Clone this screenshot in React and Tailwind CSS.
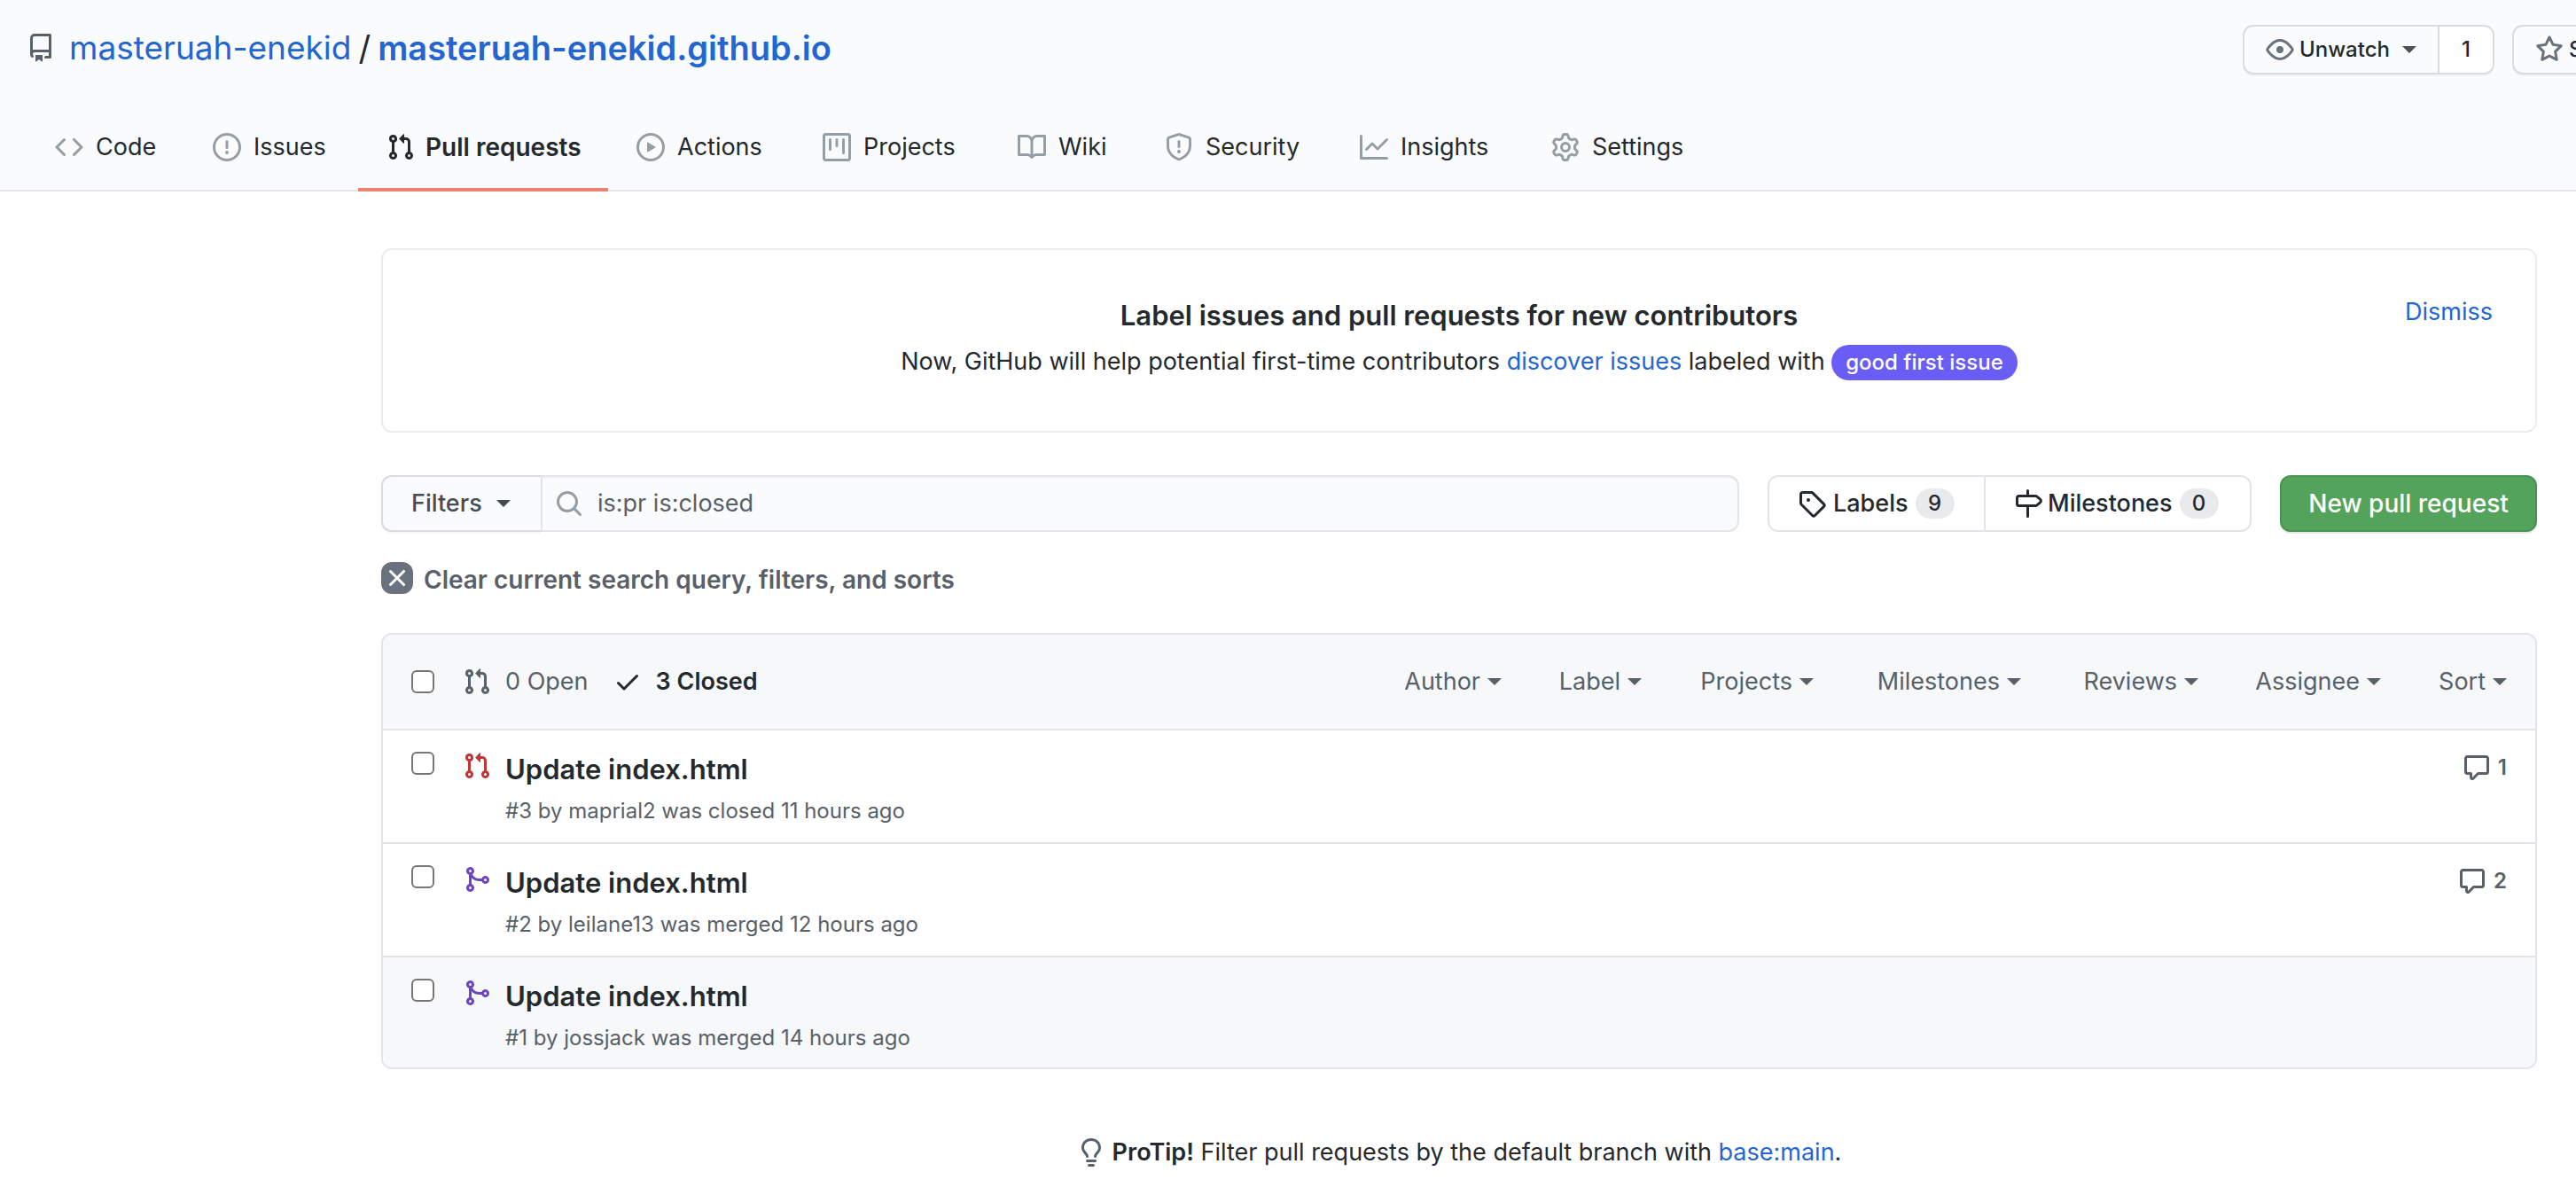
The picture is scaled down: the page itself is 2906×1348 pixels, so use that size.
import React from "react";

const PATHS = {
  repo: "M2 2.5A2.5 2.5 0 014.5 0h8.75a.75.75 0 01.75.75v12.5a.75.75 0 01-.75.75h-2.5a.75.75 0 110-1.5h1.75v-2h-8a1 1 0 00-.714 1.7.75.75 0 01-1.072 1.05A2.495 2.495 0 012 11.5v-9zm10.5-1V9h-8c-.356 0-.694.074-1 .208V2.5a1 1 0 011-1h8zM5 12.25v3.25a.25.25 0 00.4.2l1.45-1.087a.25.25 0 01.3 0L8.6 15.7a.25.25 0 00.4-.2v-3.25a.25.25 0 00-.25-.25h-3.5a.25.25 0 00-.25.25z",
  code: "M4.72 3.22a.75.75 0 011.06 1.06L2.06 8l3.72 3.72a.75.75 0 11-1.06 1.06L.47 8.53a.75.75 0 010-1.06l4.25-4.25zm6.56 0a.75.75 0 10-1.06 1.06L13.94 8l-3.72 3.72a.75.75 0 101.06 1.06l4.25-4.25a.75.75 0 000-1.06l-4.25-4.25z",
  issue: "M8 1.5a6.5 6.5 0 100 13 6.5 6.5 0 000-13zM0 8a8 8 0 1116 0A8 8 0 010 8zm9 3a1 1 0 11-2 0 1 1 0 012 0zm-.25-6.25a.75.75 0 00-1.5 0v3.5a.75.75 0 001.5 0v-3.5z",
  pull: "M7.177 3.073L9.573.677A.25.25 0 0110 .854v4.792a.25.25 0 01-.427.177L7.177 3.427a.25.25 0 010-.354zM3.75 2.5a.75.75 0 100 1.5.75.75 0 000-1.5zm-2.25.75a2.25 2.25 0 113 2.122v5.256a2.251 2.251 0 11-1.5 0V5.372A2.25 2.25 0 011.5 3.25zM11 2.5h-1V4h1a1 1 0 011 1v5.628a2.251 2.251 0 101.5 0V5A2.5 2.5 0 0011 2.5zm1 10.25a.75.75 0 111.5 0 .75.75 0 01-1.5 0zM3.75 12a.75.75 0 100 1.5.75.75 0 000-1.5z",
  play: "M1.5 8a6.5 6.5 0 1113 0 6.5 6.5 0 01-13 0zM8 0a8 8 0 100 16A8 8 0 008 0zM6.379 5.227A.25.25 0 006 5.442v5.117a.25.25 0 00.379.214l4.264-2.559a.25.25 0 000-.428L6.379 5.227z",
  project: "M1.75 0A1.75 1.75 0 000 1.75v12.5C0 15.216.784 16 1.75 16h12.5A1.75 1.75 0 0016 14.25V1.75A1.75 1.75 0 0014.25 0H1.75zM1.5 1.75a.25.25 0 01.25-.25h12.5a.25.25 0 01.25.25v12.5a.25.25 0 01-.25.25H1.75a.25.25 0 01-.25-.25V1.75zM11.75 3a.75.75 0 00-.75.75v7.5a.75.75 0 001.5 0v-7.5a.75.75 0 00-.75-.75zm-8.25.75a.75.75 0 011.5 0v5.5a.75.75 0 01-1.5 0v-5.5zM8 3a.75.75 0 00-.75.75v3.5a.75.75 0 001.5 0v-3.5A.75.75 0 008 3z",
  book: "M0 1.75A.75.75 0 01.75 1h4.253c1.227 0 2.317.59 3 1.501A3.744 3.744 0 0111.006 1h4.245a.75.75 0 01.75.75v10.5a.75.75 0 01-.75.75h-4.507a2.25 2.25 0 00-1.591.659l-.622.621a.75.75 0 01-1.06 0l-.622-.621A2.25 2.25 0 005.258 13H.75a.75.75 0 01-.75-.75V1.75zm8.755 3a2.25 2.25 0 012.25-2.25H14.5v9h-3.757c-.71 0-1.4.201-1.992.572l.004-7.322zm-1.504 7.324l.004-5.073-.002-2.253A2.25 2.25 0 005.003 2.5H1.5v9h3.757a3.75 3.75 0 011.994.574z",
  shield: "M7.467.133a1.75 1.75 0 011.066 0l5.25 1.68A1.75 1.75 0 0115 3.48V7c0 1.566-.32 3.182-1.303 4.682-.983 1.498-2.585 2.813-5.032 3.855a1.7 1.7 0 01-1.33 0c-2.447-1.042-4.049-2.357-5.032-3.855C1.32 10.182 1 8.566 1 7V3.48a1.75 1.75 0 011.217-1.667l5.25-1.68zm.61 1.429a.25.25 0 00-.153 0l-5.25 1.68a.25.25 0 00-.174.238V7c0 1.358.275 2.666 1.057 3.86.784 1.194 2.121 2.34 4.366 3.297a.2.2 0 00.154 0c2.245-.956 3.582-2.104 4.366-3.298C13.225 9.666 13.5 8.36 13.5 7V3.48a.25.25 0 00-.174-.237l-5.25-1.68zM9 10.5a1 1 0 11-2 0 1 1 0 012 0zm-.25-5.75a.75.75 0 10-1.5 0v3a.75.75 0 001.5 0v-3z",
  graph: "M1.5 1.75a.75.75 0 00-1.5 0v12.5c0 .414.336.75.75.75h14.5a.75.75 0 000-1.5H1.5V1.75zm14.28 2.53a.75.75 0 00-1.06-1.06L10 7.94 7.53 5.47a.75.75 0 00-1.06 0L3.22 8.72a.75.75 0 001.06 1.06L7 7.06l2.47 2.47a.75.75 0 001.06 0l5.25-5.25z",
  gear: "M7.429 1.525a6.593 6.593 0 011.142 0c.036.003.108.036.137.146l.289 1.105c.147.56.55.967.997 1.189.174.086.341.183.501.29.417.278.97.423 1.53.27l1.102-.303c.11-.03.175.016.195.046.219.31.41.641.573.989.014.031.022.11-.059.19l-.815.806c-.411.406-.562.957-.53 1.456a4.588 4.588 0 010 .582c-.032.499.119 1.05.53 1.456l.815.806c.08.08.073.159.059.19a6.494 6.494 0 01-.573.99c-.02.029-.086.074-.195.045l-1.103-.303c-.559-.153-1.112-.008-1.529.27-.16.107-.327.204-.5.29-.449.222-.851.628-.998 1.189l-.289 1.105c-.029.11-.101.143-.137.146a6.613 6.613 0 01-1.142 0c-.036-.003-.108-.037-.137-.146l-.289-1.105c-.147-.56-.55-.967-.997-1.189a4.502 4.502 0 01-.501-.29c-.417-.278-.97-.423-1.53-.27l-1.102.303c-.11.03-.175-.016-.195-.046a6.492 6.492 0 01-.573-.989c-.014-.031-.022-.11.059-.19l.815-.806c.411-.406.562-.957.53-1.456a4.587 4.587 0 010-.582c.032-.499-.119-1.05-.53-1.456l-.815-.806c-.08-.08-.073-.159-.059-.19a6.44 6.44 0 01.573-.99c.02-.029.086-.075.195-.045l1.103.303c.559.153 1.112.008 1.529-.27.16-.107.327-.204.5-.29.449-.222.851-.628.998-1.189l.289-1.105c.029-.11.101-.143.137-.146zM8 0c-.236 0-.47.01-.701.03-.743.065-1.29.615-1.458 1.261l-.29 1.106c-.017.066-.078.158-.211.224a5.994 5.994 0 00-.668.386c-.123.082-.233.09-.3.071L3.27 2.776c-.644-.177-1.392.02-1.82.63a7.977 7.977 0 00-.704 1.217c-.315.675-.111 1.422.363 1.891l.815.806c.05.048.098.147.088.294a6.084 6.084 0 000 .772c.01.147-.038.246-.088.294l-.815.806c-.474.469-.678 1.216-.363 1.891.2.428.436.835.704 1.218.428.609 1.176.806 1.82.63l1.103-.303c.066-.019.176-.011.299.071.213.143.436.272.668.386.133.066.194.158.212.224l.289 1.106c.169.646.715 1.196 1.458 1.26a8.094 8.094 0 001.402 0c.743-.064 1.29-.614 1.458-1.26l.29-1.106c.017-.066.078-.158.211-.224a5.98 5.98 0 00.668-.386c.123-.082.233-.09.3-.071l1.102.302c.644.177 1.392-.02 1.82-.63.268-.382.505-.789.704-1.217.315-.675.111-1.422-.364-1.891l-.814-.806c-.05-.048-.098-.147-.088-.294a6.1 6.1 0 000-.772c-.01-.147.039-.246.088-.294l.814-.806c.475-.469.679-1.216.364-1.891a7.992 7.992 0 00-.704-1.218c-.428-.609-1.176-.806-1.82-.63l-1.103.303c-.066.019-.176.011-.299-.071a5.991 5.991 0 00-.668-.386c-.133-.066-.194-.158-.212-.224L10.16 1.29C9.99.645 9.444.095 8.701.031A8.094 8.094 0 008 0zm1.5 8a1.5 1.5 0 11-3 0 1.5 1.5 0 013 0zM11 8a3 3 0 11-6 0 3 3 0 016 0z",
  eye: "M1.679 7.932c.412-.621 1.242-1.75 2.366-2.717C5.175 4.242 6.527 3.5 8 3.5c1.473 0 2.824.742 3.955 1.715 1.124.967 1.954 2.096 2.366 2.717a.119.119 0 010 .136c-.412.621-1.242 1.75-2.366 2.717C10.825 11.758 9.473 12.5 8 12.5c-1.473 0-2.824-.742-3.955-1.715C2.92 9.818 2.09 8.69 1.679 8.068a.119.119 0 010-.136zM8 2c-1.981 0-3.67.992-4.933 2.078C1.797 5.169.88 6.423.43 7.1a1.619 1.619 0 000 1.798c.45.678 1.367 1.932 2.637 3.024C4.329 13.008 6.019 14 8 14c1.981 0 3.67-.992 4.933-2.078 1.27-1.091 2.187-2.345 2.637-3.023a1.619 1.619 0 000-1.798c-.45-.678-1.367-1.932-2.637-3.023C11.671 2.992 9.981 2 8 2zm0 8a2 2 0 100-4 2 2 0 000 4z",
  star: "M8 .25a.75.75 0 01.673.418l1.882 3.815 4.21.612a.75.75 0 01.416 1.279l-3.046 2.97.719 4.192a.75.75 0 01-1.088.791L8 12.347l-3.766 1.98a.75.75 0 01-1.088-.79l.72-4.194L.818 6.374a.75.75 0 01.416-1.28l4.21-.611L7.327.668A.75.75 0 018 .25zm0 2.445L6.615 5.5a.75.75 0 01-.564.41l-3.097.45 2.24 2.184a.75.75 0 01.216.664l-.528 3.084 2.769-1.456a.75.75 0 01.698 0l2.77 1.456-.53-3.084a.75.75 0 01.216-.664l2.24-2.183-3.096-.45a.75.75 0 01-.564-.41L8 2.694v.001z",
  search: "M11.5 7a4.499 4.499 0 11-8.998 0A4.499 4.499 0 0111.5 7zm-.82 4.74a6 6 0 111.06-1.06l3.04 3.04a.75.75 0 11-1.06 1.06l-3.04-3.04z",
  tag: "M2.5 7.775V2.75a.25.25 0 01.25-.25h5.025a.25.25 0 01.177.073l6.25 6.25a.25.25 0 010 .354l-5.025 5.025a.25.25 0 01-.354 0l-6.25-6.25a.25.25 0 01-.073-.177zm-1.5 0V2.75C1 1.784 1.784 1 2.75 1h5.025c.464 0 .91.184 1.238.513l6.25 6.25a1.75 1.75 0 010 2.474l-5.026 5.026a1.75 1.75 0 01-2.474 0l-6.25-6.25A1.75 1.75 0 011 7.775zM6 5a1 1 0 100 2 1 1 0 000-2z",
  milestone: "M7.75 0a.75.75 0 01.75.75V3h3.634c.414 0 .814.147 1.13.414l2.07 1.75a1.75 1.75 0 010 2.672l-2.07 1.75a1.75 1.75 0 01-1.13.414H8.5v5.25a.75.75 0 11-1.5 0V10H2.75A1.75 1.75 0 011 8.25v-3.5C1 3.784 1.784 3 2.75 3H7V.75A.75.75 0 017.75 0zm0 8.5h4.384a.25.25 0 00.161-.06l2.07-1.75a.25.25 0 000-.38l-2.07-1.75a.25.25 0 00-.161-.06H2.75a.25.25 0 00-.25.25v3.5c0 .138.112.25.25.25h5z",
  x: "M3.72 3.72a.75.75 0 011.06 0L8 6.94l3.22-3.22a.75.75 0 111.06 1.06L9.06 8l3.22 3.22a.75.75 0 11-1.06 1.06L8 9.06l-3.22 3.22a.75.75 0 01-1.06-1.06L6.94 8 3.72 4.78a.75.75 0 010-1.06z",
  check: "M13.78 4.22a.75.75 0 010 1.06l-7.25 7.25a.75.75 0 01-1.06 0L2.22 9.28a.75.75 0 011.06-1.06L6 10.94l6.72-6.72a.75.75 0 011.06 0z",
  merge: "M5 3.254V3.25v.005a.75.75 0 110-.005v.004zm.45 1.9a2.25 2.25 0 10-1.95.218v5.256a2.25 2.25 0 101.5 0V7.123A5.735 5.735 0 009.25 9h1.378a2.251 2.251 0 100-1.5H9.25a4.25 4.25 0 01-3.8-2.346zM12.75 9a.75.75 0 100-1.5.75.75 0 000 1.5zm-8.5 4.5a.75.75 0 100-1.5.75.75 0 000 1.5z",
  comment: "M2.75 2.5a.25.25 0 00-.25.25v7.5c0 .138.112.25.25.25h2a.75.75 0 01.75.75v2.19l2.72-2.72a.75.75 0 01.53-.22h4.5a.25.25 0 00.25-.25v-7.5a.25.25 0 00-.25-.25H2.75zM1 2.75C1 1.784 1.784 1 2.75 1h10.5c.966 0 1.75.784 1.75 1.75v7.5A1.75 1.75 0 0113.25 12H9.06l-2.573 2.573A1.457 1.457 0 014 13.543V12H2.75A1.75 1.75 0 011 10.25v-7.5z",
  bulb: "M8 1.5c-2.363 0-4 1.69-4 3.75 0 .984.424 1.625.984 2.304l.214.253c.223.264.47.556.673.848.284.411.537.896.621 1.49a.75.75 0 01-1.484.211c-.04-.282-.163-.547-.37-.847a8.695 8.695 0 00-.542-.68c-.084-.1-.173-.205-.268-.32C3.201 7.75 2.5 6.766 2.5 5.25 2.5 2.31 4.863 0 8 0s5.5 2.31 5.5 5.25c0 1.516-.701 2.5-1.328 3.259-.095.115-.184.22-.268.319-.207.245-.383.453-.541.681-.208.3-.33.565-.37.847a.75.75 0 01-1.485-.212c.084-.593.337-1.078.621-1.489.203-.292.45-.584.673-.848.075-.088.147-.173.213-.253.561-.679.985-1.32.985-2.304 0-2.06-1.637-3.75-4-3.75zM6 15.25a.75.75 0 01.75-.75h2.5a.75.75 0 010 1.5h-2.5a.75.75 0 01-.75-.75zM5.75 12a.75.75 0 000 1.5h4.5a.75.75 0 000-1.5h-4.5z",
};

function Icon({ name, className = "" }) {
  return (
    <svg viewBox="0 0 16 16" aria-hidden="true" fill="currentColor" fillRule="evenodd" className={`size-8 shrink-0 ${className}`}>
      <path d={PATHS[name]} />
    </svg>
  );
}

function Caret() {
  return (
    <svg viewBox="0 0 16 8" aria-hidden="true" fill="currentColor" className="h-2 w-4 shrink-0">
      <path d="M0 0h16L8 8z" />
    </svg>
  );
}

const TABS = [
  { icon: "code", label: "Code", width: "min-w-[178px]" },
  { icon: "issue", label: "Issues", width: "min-w-[196px]" },
  { icon: "pull", label: "Pull requests", width: "min-w-[282px]", active: true },
  { icon: "play", label: "Actions", width: "min-w-[210px]" },
  { icon: "project", label: "Projects", width: "min-w-[220px]" },
  { icon: "book", label: "Wiki", width: "min-w-[166px]" },
  { icon: "shield", label: "Security", width: "min-w-[220px]" },
  { icon: "graph", label: "Insights", width: "min-w-[216px]" },
  { icon: "gear", label: "Settings", width: "min-w-[216px]" },
];

const MENUS = [
  { label: "Author", width: "w-[174px]" },
  { label: "Label", width: "w-[158px]" },
  { label: "Projects", width: "w-[194px]" },
  { label: "Milestones", width: "w-[234px]" },
  { label: "Reviews", width: "w-[200px]" },
  { label: "Assignee", width: "w-[206px]" },
  { label: "Sort", width: "w-[142px]" },
];

const PULLS = [
  { id: 3, icon: "pull", tint: "text-[#c03538]", meta: "#3 by maprial2 was closed 11 hours ago", comments: 1, bg: "bg-white" },
  { id: 2, icon: "merge", tint: "text-[#6c45bf]", meta: "#2 by leilane13 was merged 12 hours ago", comments: 2, bg: "bg-white" },
  { id: 1, icon: "merge", tint: "text-[#6c45bf]", meta: "#1 by jossjack was merged 14 hours ago", comments: 0, bg: "bg-[#f6f8fa]" },
];

function Checkbox({ label }) {
  return (
    <input
      type="checkbox"
      aria-label={label}
      className="size-[26px] shrink-0 appearance-none rounded-[6px] border-2 border-[#767676] bg-white checked:bg-[#0366d6]"
    />
  );
}

function Header() {
  return (
    <header className="border-b-2 border-[#e1e4e8] bg-[#fafbfc]">
      <div className="flex items-start justify-between pt-7 pl-[30px]">
        <h1 className="flex items-center text-[38px] leading-[52px] text-[#24292e]">
          <Icon name="repo" className="mr-4 text-[#586069]" />
          <a href="#owner" className="text-[37px] text-[#2366d1]">masteruah-enekid</a>
          <span className="mx-2">/</span>
          <a href="#repo" className="font-semibold text-[#2366d1]">masteruah-enekid.github.io</a>
        </h1>
        <div className="flex w-[376px] shrink-0 gap-5 text-2xl font-medium text-[#24292e]">
          <div className="flex h-14 shrink-0 overflow-hidden rounded-xl border-2 border-[#d9dbdd] shadow-[0_2px_0_rgba(27,31,35,0.04)]">
            <button type="button" className="flex w-[218px] items-center pl-6">
              <Icon name="eye" className="mr-[6px] text-[#6a737d]" />
              Unwatch
              <span className="ml-[14px] text-[#4b5158]"><Caret /></span>
            </button>
            <a href="#watchers" className="flex w-[62px] items-center justify-center border-l-2 border-[#d9dbdd] bg-white">1</a>
          </div>
          <button type="button" className="flex h-14 w-[172px] shrink-0 items-center rounded-xl border-2 border-[#d9dbdd] pl-6 shadow-[0_2px_0_rgba(27,31,35,0.04)]">
            <Icon name="star" className="mr-[6px] text-[#6a737d]" />
            Star
          </button>
        </div>
      </div>
      <nav aria-label="Repository" className="mt-8 flex pl-[30px]">
        {TABS.map((t) => (
          <a
            key={t.label}
            href={`#${t.icon}`}
            aria-current={t.active ? "page" : undefined}
            className={`-mb-[2px] flex h-[100px] shrink-0 items-center border-b-4 pt-1 pl-8 text-[#24292e] ${t.width} ${
              t.active ? "border-[#ec8370] text-[28px] font-semibold" : "border-transparent text-[27px]"
            }`}
          >
            <Icon name={t.icon} className={t.active ? "mr-3 text-[#24292e]" : "mr-[14px] text-[#959da5]"} />
            {t.label}
          </a>
        ))}
      </nav>
    </header>
  );
}

function Notice() {
  return (
    <section className="relative rounded-xl border-2 border-[#eaecef] px-12 pt-12 pb-[52px] text-center">
      <h2 className="text-[31px] leading-[52px] font-semibold">Label issues and pull requests for new contributors</h2>
      <p className="text-[27px] leading-[52px]">
        Now, GitHub will help potential first-time contributors <a href="#discover" className="text-[#2366d1]">discover issues</a> labeled with{" "}
        <a href="#good-first-issue" className="inline-flex h-10 items-center rounded-full bg-[#6a5df6] px-4 text-2xl font-medium text-white">
          good first issue
        </a>
      </p>
      <button type="button" className="absolute top-12 right-12 text-[27px] leading-[44px] text-[#2366d1]">Dismiss</button>
    </section>
  );
}

function Counter({ children }) {
  return (
    <span className="flex h-[34px] w-11 items-center justify-center rounded-full bg-[#e8eaeb] text-2xl">{children}</span>
  );
}

function Toolbar() {
  return (
    <div className="mt-12 flex h-16 text-[27px]">
      <button
        type="button"
        className="flex w-[180px] shrink-0 items-center rounded-l-xl border-2 border-r-0 border-[#d9dbdd] bg-[#fafbfc] pl-8 font-medium text-[#444d56] shadow-[0_2px_0_rgba(27,31,35,0.04)]"
      >
        Filters
        <span className="ml-4"><Caret /></span>
      </button>
      <label className="flex flex-1 items-center rounded-r-xl border-2 border-[#e1e4e8] bg-[#fafbfc] pl-[14px] shadow-[inset_0_2px_0_rgba(225,228,232,0.3)]">
        <Icon name="search" className="mr-4 text-[#959da5]" />
        <input
          type="text"
          aria-label="Search all issues"
          defaultValue="is:pr is:closed"
          className="w-full bg-transparent text-[#586069] outline-none"
        />
      </label>
      <div className="ml-8 flex w-[546px] shrink-0 rounded-xl border-2 border-[#e1e4e8] font-medium">
        <a href="#labels" className="flex w-[242px] items-center pl-8">
          <Icon name="tag" className="mr-2" />
          Labels
          <span className="ml-2"><Counter>9</Counter></span>
        </a>
        <a href="#milestones" className="flex flex-1 items-center border-l-2 border-[#e1e4e8] pl-8">
          <Icon name="milestone" className="mr-[6px]" />
          Milestones
          <span className="ml-2"><Counter>0</Counter></span>
        </a>
      </div>
      <button
        type="button"
        className="ml-8 w-[290px] shrink-0 rounded-xl border-2 border-[#4a934f] bg-[#54a35b] text-[28px] font-medium text-white shadow-[0_2px_0_rgba(27,31,35,0.1)]"
      >
        New pull request
      </button>
    </div>
  );
}

function PullList() {
  return (
    <section aria-label="Pull requests" className="mt-10 overflow-hidden rounded-xl border-2 border-[#e1e4e8]">
      <div className="flex h-[106px] items-center bg-[#f6f8fa] pl-8 text-[27px] text-[#586069]">
        <Checkbox label="Select all pull requests" />
        <a href="#open" className="ml-8 flex items-center">
          <Icon name="pull" className="mr-4" />
          0 Open
        </a>
        <a href="#closed" className="ml-7 flex items-center font-semibold text-[#24292e]">
          <Icon name="check" className="mr-4" />
          3 Closed
        </a>
        <div className="ml-auto flex">
          {MENUS.map((m) => (
            <button key={m.label} type="button" className={`flex items-center justify-end gap-2 pr-8 ${m.width}`}>
              {m.label}
              <Caret />
            </button>
          ))}
        </div>
      </div>
      <ul>
        {PULLS.map((p) => (
          <li key={p.id} className={`flex items-start border-t-2 border-[#e1e4e8] px-8 pt-6 pb-3 last:pb-[10px] ${p.bg}`}>
            <Checkbox label={`Select pull request ${p.id}`} />
            <Icon name={p.icon} className={`mr-4 ml-8 ${p.tint}`} />
            <div className="flex-1">
              <a href={`#pull-${p.id}`} className="block text-[31px] leading-10 font-semibold">Update index.html</a>
              <p className="mt-1 text-2xl leading-[46px] text-[#586069]">{p.meta}</p>
            </div>
            {p.comments > 0 && (
              <a
                href={`#comments-${p.id}`}
                aria-label={`${p.comments} comments`}
                className="flex items-center gap-2 pt-[2px] text-2xl leading-8 font-semibold text-[#586069]"
              >
                <Icon name="comment" />
                {p.comments}
              </a>
            )}
          </li>
        ))}
      </ul>
    </section>
  );
}

export default function App() {
  return (
    <div className="min-h-screen overflow-x-hidden bg-white font-['Inter','Liberation_Sans',sans-serif] text-[#24292e]">
      <Header />
      <main className="pt-16 pr-11 pl-[430px]">
        <Notice />
        <Toolbar />
        <a href="#clear" className="mt-[34px] flex items-start text-[28px] leading-10 font-semibold text-[#586069]">
          <span className="mr-3 flex size-9 items-center justify-center rounded-xl bg-[#6a737d] text-white">
            <Icon name="x" />
          </span>
          Clear current search query, filters, and sorts
        </a>
        <PullList />
        <p className="mt-[72px] flex items-center justify-center text-[27px] leading-[44px]">
          <Icon name="bulb" className="mr-2 text-[#586069]" />
          <span>
            <strong className="font-semibold">ProTip!</strong> Filter pull requests by the default branch with{" "}
            <a href="#base" className="text-[#2366d1]">base:main</a>.
          </span>
        </p>
      </main>
    </div>
  );
}
